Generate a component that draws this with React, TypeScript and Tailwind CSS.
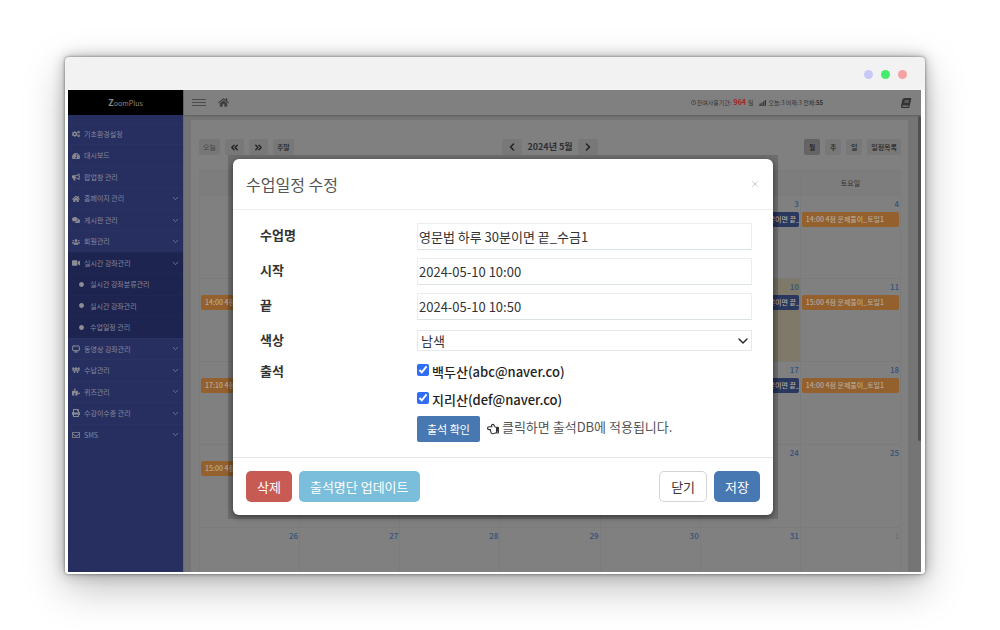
import React, { useState } from 'react';
import {
  FaCogs, FaTachometerAlt, FaBullhorn, FaHome, FaComments, FaUsers, FaVideo, FaWonSign,
  FaPuzzlePiece, FaPrint, FaRegEnvelope, FaCircle, FaRegClock, FaBook, FaRegHandPointLeft,
} from 'react-icons/fa';
import {
  ChevronDown, ChevronLeft, ChevronRight, ChevronsLeft, ChevronsRight, Monitor, X,
} from 'lucide-react';

type MenuItem = { label: string; icon: React.ElementType; arrow?: boolean; open?: boolean; sub?: boolean };

const MENU: MenuItem[] = [
  { label: '기초환경설정', icon: FaCogs },
  { label: '대시보드', icon: FaTachometerAlt },
  { label: '팝업창 관리', icon: FaBullhorn },
  { label: '홈페이지 관리', icon: FaHome, arrow: true },
  { label: '게시판 관리', icon: FaComments, arrow: true },
  { label: '회원관리', icon: FaUsers, arrow: true },
  { label: '실시간 강좌관리', icon: FaVideo, arrow: true, open: true },
  { label: '실시간 강좌분류관리', icon: FaCircle, sub: true },
  { label: '실시간 강좌관리', icon: FaCircle, sub: true },
  { label: '수업일정 관리', icon: FaCircle, sub: true },
  { label: '동영상 강좌관리', icon: Monitor, arrow: true },
  { label: '수납관리', icon: FaWonSign, arrow: true },
  { label: '퀴즈관리', icon: FaPuzzlePiece, arrow: true },
  { label: '수강이수증 관리', icon: FaPrint, arrow: true },
  { label: 'SMS', icon: FaRegEnvelope, arrow: true },
];

const WEEKDAYS = ['일요일', '월요일', '화요일', '수요일', '목요일', '금요일', '토요일'];

const WEEKS = [
  [28, 29, 30, 1, 2, 3, 4],
  [5, 6, 7, 8, 9, 10, 11],
  [12, 13, 14, 15, 16, 17, 18],
  [19, 20, 21, 22, 23, 24, 25],
  [26, 27, 28, 29, 30, 31, 1],
];

// keyed by "week-day"
const EVENTS: Record<string, { text: string; navy?: boolean }> = {
  '0-5': { text: '10:00 영문법 하루 30분이면 끝_수금1', navy: true },
  '0-6': { text: '14:00 4점 문제풀이_토일1' },
  '1-0': { text: '14:00 4점 문제풀이_토일1' },
  '1-5': { text: '10:00 영문법 하루 30분이면 끝_수금1', navy: true },
  '1-6': { text: '15:00 4점 문제풀이_토일1' },
  '2-0': { text: '17:10 4점 문제풀이_토일1' },
  '2-5': { text: '10:00 영문법 하루 30분이면 끝_수금1', navy: true },
  '2-6': { text: '14:00 4점 문제풀이_토일1' },
  '3-0': { text: '15:00 4점 문제풀이_토일1' },
};

function Sidebar() {
  return (
    <aside className="w-[115px] shrink-0 bg-[#272f61]">
      <div className="h-[25px] bg-black text-center text-[7px] leading-[25px] text-[#8a8a8a]">
        <b className="text-[9px]">Z</b>oomPlus
      </div>
      <ul className="mt-2 h-[322px] grid auto-rows-fr text-[7px] text-[#85879b]">
        {MENU.map(({ label, icon: Icon, arrow, open, sub }, i) => (
          <li key={i} className={`border-t ${open || sub ? 'border-[#20284f] bg-[#1d2450]' : 'border-[#2b3363]'}`}>
            <a href="#" className={`h-full flex items-center pr-[3px] ${sub ? 'pl-[11px] gap-1.5' : 'pl-1 gap-1'}`}>
              <Icon className={sub ? 'size-[5px] text-[#8c8c94]' : 'size-2 text-[#8c8c94]'} strokeWidth={Icon === Monitor ? 3 : undefined} />
              <span className="grow whitespace-nowrap">{label}</span>
              {arrow && <ChevronDown className="size-[9px]" />}
            </a>
          </li>
        ))}
      </ul>
    </aside>
  );
}

function BarsIcon() {
  return (
    <svg viewBox="0 0 12 10" className="w-[7px] h-[6px] ml-1.5 mr-0.5" fill="currentColor">
      <path d="M0 9h12v1H0zM1 6h2v2.5H1zM4 4h2v4.5H4zM7 2h2v6.5H7zM10 0h2v8.5h-2z" />
    </svg>
  );
}

function TopBar() {
  return (
    <header className="relative h-[25px] shrink-0 bg-[#808080] shadow-[0_1px_2px_rgba(0,0,0,0.2)] flex items-center pl-2 pr-2.5 text-[#404040]">
      <button aria-label="메뉴" className="flex flex-col gap-0.5">
        <span className="w-3.5 h-px bg-[#4c4c4c]" />
        <span className="w-3.5 h-px bg-[#4c4c4c]" />
        <span className="w-3.5 h-px bg-[#4c4c4c]" />
      </button>
      <FaHome className="ml-3 size-[11px]" />
      <div className="ml-auto flex items-center text-[6px] text-[#333] whitespace-nowrap">
        <FaRegClock className="size-[5px] mr-px" />
        잔여사용기간:<b className="mx-0.5 text-[7px] text-[#a8211c]">964</b>일
        <BarsIcon />
        오늘:3&nbsp;어제:3&nbsp;전체:<b>55</b>
      </div>
      <FaBook className="ml-[78px] size-[10px] -skew-x-12 text-[#333]" />
    </header>
  );
}

function ToolButton({ children, active, disabled }: { children: React.ReactNode; active?: boolean; disabled?: boolean }) {
  return (
    <button
      disabled={disabled}
      className={`h-4 min-w-4 px-1 rounded-xs flex items-center justify-center text-[7px] font-medium ${
        active ? 'bg-[#666] shadow-inner text-[#222]' : disabled ? 'bg-[#777] text-[#4a4a4a]' : 'bg-[#787878] text-[#222]'
      }`}
    >
      {children}
    </button>
  );
}

function Calendar() {
  return (
    <main className="grow min-h-0 overflow-hidden bg-[#757575] pt-[5px] pl-[7px] pr-[13px]">
      <div className="h-full bg-[#808080] pt-[19px] pl-2 pr-[7px]">
        <div className="h-4 grid grid-cols-3">
          <div className="flex gap-[5px]">
            <ToolButton disabled>오늘</ToolButton>
            <ToolButton><ChevronsLeft className="size-[11px]" strokeWidth={3} /></ToolButton>
            <ToolButton><ChevronsRight className="size-[11px]" strokeWidth={3} /></ToolButton>
            <ToolButton>주말</ToolButton>
          </div>
          <div className="flex items-center justify-center gap-[5px]">
            <ToolButton><ChevronLeft className="size-3" strokeWidth={3} /></ToolButton>
            <h2 className="text-[9px] font-bold text-[#2c2f36] whitespace-nowrap">2024년 5월</h2>
            <ToolButton><ChevronRight className="size-3" strokeWidth={3} /></ToolButton>
          </div>
          <div className="flex justify-end gap-[5px]">
            <ToolButton active>월</ToolButton>
            <ToolButton>주</ToolButton>
            <ToolButton>일</ToolButton>
            <ToolButton>일정목록</ToolButton>
          </div>
        </div>

        <table className="mt-[15px] w-full table-fixed border-collapse">
          <thead>
            <tr className="h-[25px] bg-[#7d7d7d]">
              {WEEKDAYS.map((d) => (
                <th key={d} className="p-0 border border-[#7b7b7b] text-[7px] font-normal text-[#333]">{d}</th>
              ))}
            </tr>
          </thead>
          <tbody>
            {WEEKS.map((week, w) => (
              <tr key={w} className="h-[83px]">
                {week.map((day, d) => {
                  const ev = EVENTS[`${w}-${d}`];
                  const other = (w === 0 && day > 7) || (w === 4 && day === 1);
                  return (
                    <td key={d} className={`p-0 align-top border border-[#7b7b7b] ${w === 1 && d === 5 ? 'bg-[#7e7969]' : ''}`}>
                      <div className={`h-4 pr-px text-right text-[8px] leading-[15px] font-medium ${other ? 'text-[#6c7178]' : 'text-[#34527a]'}`}>{day}</div>
                      {ev && (
                        <div className={`mx-px h-[15px] rounded-xs pl-1 text-[7px] leading-[15px] font-medium text-[#b5aa9c] whitespace-nowrap overflow-hidden ${ev.navy ? 'bg-[#2a385f]' : 'bg-[#94602d]'}`}>
                          {ev.text}
                        </div>
                      )}
                    </td>
                  );
                })}
              </tr>
            ))}
          </tbody>
        </table>
      </div>
    </main>
  );
}

function Field({ label, id, children }: { label: string; id?: string; children: React.ReactNode }) {
  return (
    <div className="flex">
      <label htmlFor={id} className="w-[157px] shrink-0 pt-0.5 text-[13px] leading-5 font-bold text-[#333]">{label}</label>
      <div className="grow">{children}</div>
    </div>
  );
}

const inputClass = 'block w-full h-[27px] border border-[#e8eef1] border-b-[#dbe3e6] pl-px text-[13px] text-[#333] outline-none';

function EditModal() {
  const [name, setName] = useState('영문법 하루 30분이면 끝_수금1');
  const [start, setStart] = useState('2024-05-10 10:00');
  const [end, setEnd] = useState('2024-05-10 10:50');

  return (
    <div className="bg-black/15 py-1 px-[5px]">
      <div role="dialog" aria-label="수업일정 수정" className="w-[540px] bg-white rounded-md shadow-[0_2px_6px_rgba(0,0,0,0.5)]">
        <div className="h-[51px] px-[13px] flex items-center justify-between border-b border-[#f0f0f0]">
          <h4 className="text-[16px] text-[#555]">수업일정 수정</h4>
          <button aria-label="닫기"><X className="size-[10px] text-[#c4c4c4]" strokeWidth={2} /></button>
        </div>

        <form className="pt-[13px] pb-[15px] pl-[27px] pr-[21px]">
          <div className="flex flex-col gap-2">
            <Field label="수업명" id="name">
              <input id="name" value={name} onChange={(e) => setName(e.target.value)} className={inputClass} />
            </Field>
            <Field label="시작" id="start">
              <input id="start" value={start} onChange={(e) => setStart(e.target.value)} className={inputClass} />
            </Field>
            <Field label="끝" id="end">
              <input id="end" value={end} onChange={(e) => setEnd(e.target.value)} className={inputClass} />
            </Field>
            <Field label="색상" id="color">
              <div className="relative mt-0.5">
                <select id="color" className="block w-full h-[21px] border border-[#e3e9ed] pl-[3px] text-[13px] leading-[19px] text-[#333] appearance-none bg-white">
                  <option>남색</option>
                </select>
                <ChevronDown className="absolute right-px top-[3px] size-4 text-[#222]" strokeWidth={2} />
              </div>
            </Field>
            <Field label="출석">
              <div className="flex flex-col gap-2 pt-[3px]">
                <label className="flex gap-[3px] text-[13px] leading-5 font-medium text-[#222]">
                  <input type="checkbox" defaultChecked className="size-3 mt-0.5 accent-[#2f6df6]" />
                  백두산(abc@naver.co)
                </label>
                <label className="flex gap-[3px] text-[13px] leading-5 font-medium text-[#222]">
                  <input type="checkbox" defaultChecked className="size-3 mt-0.5 accent-[#2f6df6]" />
                  지리산(def@naver.co)
                </label>
              </div>
              <div className="mt-1.5 flex items-center text-[13px] text-[#555]">
                <button type="button" className="h-[26px] px-2.5 rounded-xs bg-[#4878b2] text-[11px] text-white">출석 확인</button>
                <FaRegHandPointLeft className="ml-[7px] mr-[3px] size-3 text-[#333]" />
                <span className="leading-5 pb-1">클릭하면 출석DB에 적용됩니다.</span>
              </div>
            </Field>
          </div>
        </form>

        <div className="border-t border-[#e5e5e5] px-[13px] py-[13px] flex gap-[7px] text-[13px] text-white">
          <button className="h-[31px] px-[11px] rounded-[5px] bg-[#c75b54]">삭제</button>
          <button className="h-[31px] px-[11px] rounded-[5px] bg-[#7abedb]">출석명단 업데이트</button>
          <button className="ml-auto h-[31px] px-[11px] rounded-[5px] border border-[#d4d4d4] bg-white text-[#333]">닫기</button>
          <button className="h-[31px] px-[11px] rounded-[5px] bg-[#4878b2]">저장</button>
        </div>
      </div>
    </div>
  );
}

export default function App() {
  return (
    <div className="h-screen bg-white pt-[57px] pb-14 pl-[65px] pr-[75px] font-['Noto_Sans_CJK_KR',sans-serif]">
      <div className="h-full flex flex-col rounded-sm bg-[#f2f2f2] shadow-[0_0_3px_rgba(0,0,0,0.5),0_0_14px_rgba(0,0,0,0.3),0_14px_40px_rgba(0,0,0,0.25)]">
        <div className="h-[33px] shrink-0 flex items-center justify-end gap-2 pr-[18px] pt-0.5">
          <span className="size-[9px] rounded-full bg-[#c9c9f8]" />
          <span className="size-[9px] rounded-full bg-[#46ec6c]" />
          <span className="size-[9px] rounded-full bg-[#f5a3a0]" />
        </div>
        <div className="grow min-h-0 flex bg-white rounded-b-sm pl-[3px] pr-1 pb-0.5">
          <div className="relative grow min-w-0 flex overflow-hidden">
            <Sidebar />
            <div className="grow min-w-0 flex flex-col border-l border-[#6a6a6a]">
              <TopBar />
              <Calendar />
            </div>
            <div className="absolute right-0 top-[26px] w-[3px] h-[325px] rounded-full bg-[#505050]" />
            <div className="absolute inset-0 flex items-start justify-center pl-[17px] pt-[65px]">
              <EditModal />
            </div>
          </div>
        </div>
      </div>
    </div>
  );
}
